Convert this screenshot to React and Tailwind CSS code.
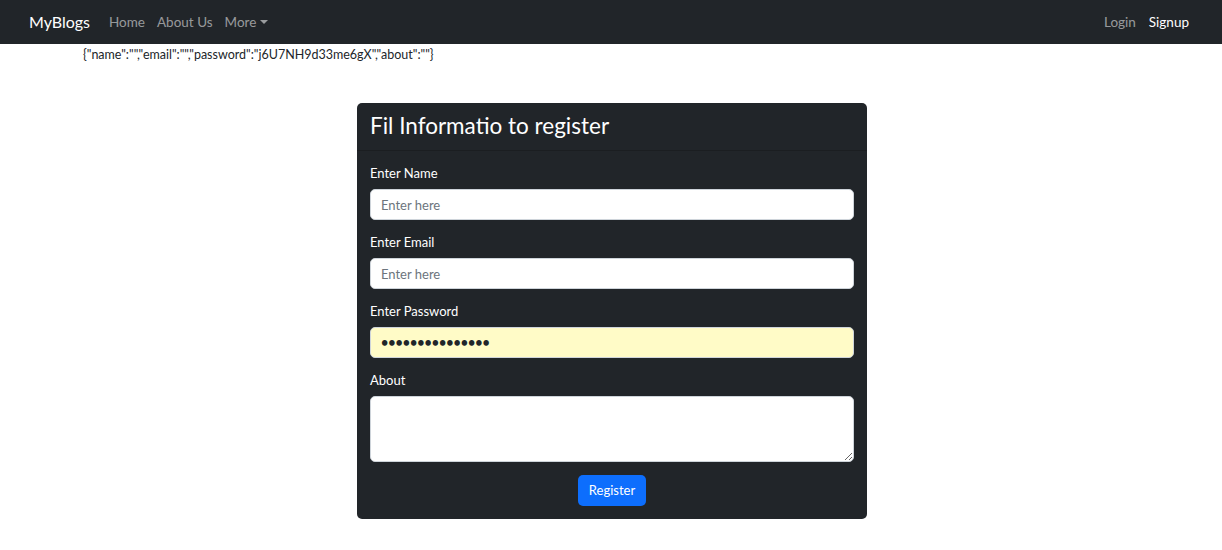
import { useState } from "react";

export default function App() {
  const [form, setForm] = useState({ name: "", email: "", password: "j6U7NH9d33me6gX", about: "" });

  const handleChange = (e) => {
    setForm({ ...form, [e.target.name]: e.target.value });
  };

  return (
    <div className="min-h-[550px] bg-white text-[#212529]" style={{ fontFamily: 'Lato, "Noto Sans", sans-serif' }}>
      <nav className="h-[44px] bg-[#212529] flex items-center justify-between pl-[29px] pr-[33px]">
        <div className="flex items-center">
          <a href="#" className="text-[16px] text-white mr-[19px]">MyBlogs</a>
          <div className="flex items-center gap-[12px] text-[13.5px] text-[#ffffff8c]">
            <a href="#">Home</a>
            <a href="#">About Us</a>
            <a href="#" className="flex items-center">
              More
              <span className="ml-[4px] border-t-[4px] border-t-[#ffffff8c] border-x-[4px] border-x-transparent"></span>
            </a>
          </div>
        </div>
        <div className="flex items-center gap-[13px] text-[13.5px]">
          <a href="#" className="text-[#ffffff8c]">Login</a>
          <a href="#" className="text-white">Signup</a>
        </div>
      </nav>

      <div className="pl-[83px] pt-[2px] text-[12.5px] h-[59px]">{JSON.stringify(form)}</div>

      <div className="flex justify-center">
        <div className="w-[510px] bg-[#212529] rounded-[5px] text-white ml-[2px]">
          <div className="px-[13px] pt-[8px] pb-[9px] border-b border-[#1b1e21]">
            <h3 className="text-[22.5px] leading-[30px]">Fil Informatio to register</h3>
          </div>
          <form className="px-[13px] pt-[13px] pb-[13px]" onSubmit={(e) => e.preventDefault()}>
            <div className="mb-[13px]">
              <label className="block text-[13px] leading-[18px] mb-[7px]">Enter Name</label>
              <input name="name" value={form.name} onChange={handleChange} placeholder="Enter here" className="w-full h-[31px] rounded-[5px] bg-white border border-[#ced4da] px-[10px] text-[13px] text-[#212529] placeholder:text-[#6c757d] outline-none" />
            </div>
            <div className="mb-[13px]">
              <label className="block text-[13px] leading-[18px] mb-[7px]">Enter Email</label>
              <input name="email" value={form.email} onChange={handleChange} placeholder="Enter here" className="w-full h-[31px] rounded-[5px] bg-white border border-[#ced4da] px-[10px] text-[13px] text-[#212529] placeholder:text-[#6c757d] outline-none" />
            </div>
            <div className="mb-[13px]">
              <label className="block text-[13px] leading-[18px] mb-[7px]">Enter Password</label>
              <input type="password" name="password" value={form.password} onChange={handleChange} className="w-full h-[31px] rounded-[5px] bg-[#fffbc7] border border-[#ced4da] px-[10px] text-[12.5px] font-bold text-[#212529] outline-none" />
            </div>
            <div className="mb-[13px]">
              <label className="block text-[13px] leading-[18px] mb-[7px]">About</label>
              <textarea name="about" value={form.about} onChange={handleChange} className="block w-full h-[66px] rounded-[5px] bg-white border border-[#ced4da] px-[10px] py-[5px] text-[13px] text-[#212529] outline-none"></textarea>
            </div>
            <div className="flex justify-center">
              <button type="submit" className="h-[31px] px-[11px] rounded-[5px] bg-[#0d6efd] text-[13px] text-white">Register</button>
            </div>
          </form>
        </div>
      </div>
    </div>
  );
}
